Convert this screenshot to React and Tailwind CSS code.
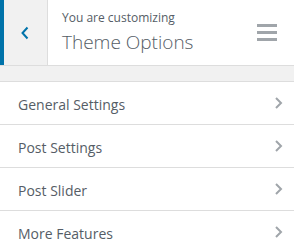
const items = ['General Settings', 'Post Settings', 'Post Slider', 'More Features'];

const Chevron = () => (
  <svg width="10" height="12" viewBox="0 0 10 12" className="text-[#a0a5aa]">
    <path d="M2 1l5 5-5 5" fill="none" stroke="currentColor" strokeWidth="2" />
  </svg>
);

export default function App() {
  return (
    <div className="w-[294px] h-[250px] overflow-hidden bg-[#f1f1f1] font-['Open_Sans',sans-serif]">
      {/* Header */}
      <div className="flex h-[66px] bg-white border-b border-[#dddddd]">
        <button className="w-[48px] shrink-0 flex items-center justify-center bg-[#f1f1f1] border-l-4 border-[#0073aa] border-r border-r-[#dddddd]">
          <svg width="10" height="14" viewBox="0 0 10 14" className="text-[#0073aa] -ml-[1px]">
            <path d="M7.5 1.5l-5 5.5 5 5.5" fill="none" stroke="currentColor" strokeWidth="2" />
          </svg>
        </button>
        <div className="flex-1 pl-[14px] pt-[9px]">
          <div className="text-[12px] leading-[18px] text-[#555d66]">You are customizing</div>
          <div className="text-[19px] leading-[31px] font-light text-[#555d66]">Theme Options</div>
        </div>
        <div className="w-[54px] flex flex-col items-center justify-center gap-[4px] pr-[1px]">
          <span className="block w-[20px] h-[3px] bg-[#a0a5aa]" />
          <span className="block w-[20px] h-[3px] bg-[#a0a5aa]" />
          <span className="block w-[20px] h-[3px] bg-[#a0a5aa]" />
        </div>
      </div>

      {/* Sections */}
      <ul className="mt-[15px] bg-white border-t border-[#dddddd]">
        {items.map((label) => (
          <li
            key={label}
            className="h-[43px] flex items-center justify-between pl-[18px] pr-[10px] border-b border-[#dddddd] text-[14px] text-[#555d66]"
          >
            <span className="pt-[2px]">{label}</span>
            <Chevron />
          </li>
        ))}
      </ul>
    </div>
  );
}
